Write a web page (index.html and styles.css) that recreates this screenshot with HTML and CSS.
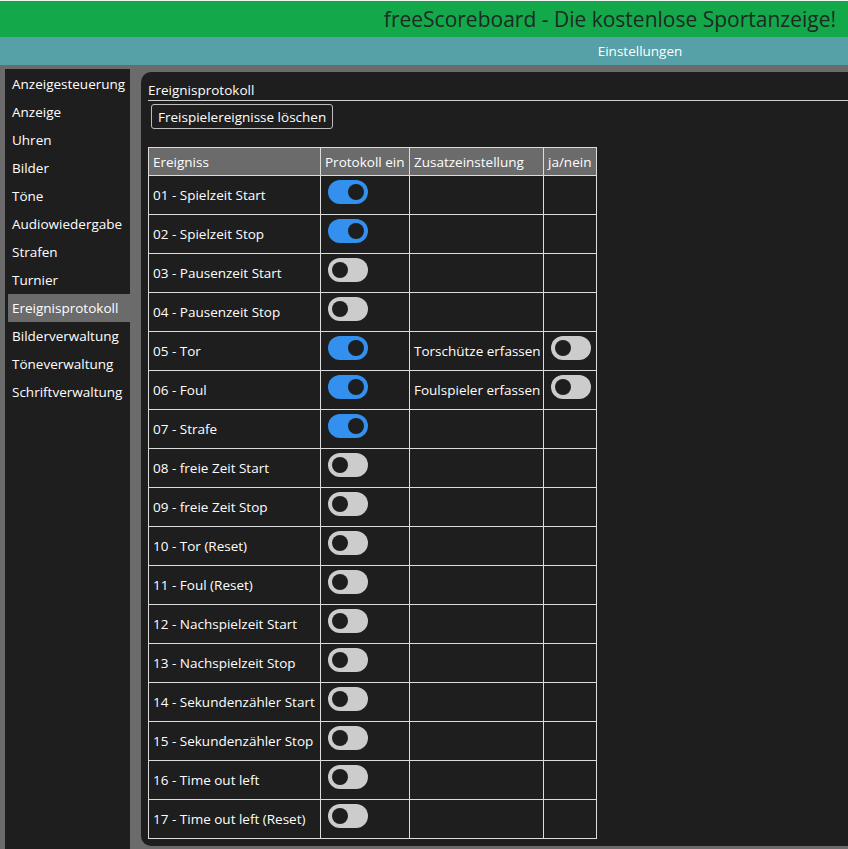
FILE: index.html
```html
<!DOCTYPE html>
<html lang="de">
<head>
    <meta charset="UTF-8">
    <meta name="viewport" content="width=device-width, initial-scale=1.0">
    <title>freeScoreboard - Einstellungen</title>
    <link rel="stylesheet" href="styles.css">
</head>
<body>
    <header class="topbar">
        <h1>freeScoreboard - Die kostenlose Sportanzeige!</h1>
    </header>
    <div class="navbar">Einstellungen</div>

    <div class="content">
        <ul class="sidebar">
            <li>Anzeigesteuerung</li>
            <li>Anzeige</li>
            <li>Uhren</li>
            <li>Bilder</li>
            <li>Töne</li>
            <li>Audiowiedergabe</li>
            <li>Strafen</li>
            <li>Turnier</li>
            <li class="active">Ereignisprotokoll</li>
            <li>Bilderverwaltung</li>
            <li>Töneverwaltung</li>
            <li>Schriftverwaltung</li>
        </ul>

        <div class="panel">
            <div class="panel-title">Ereignisprotokoll</div>
            <button class="btn">Freispielereignisse löschen</button>

            <table class="events">
                <thead>
                    <tr>
                        <th class="col-name">Ereigniss</th>
                        <th class="col-on">Protokoll ein</th>
                        <th class="col-extra">Zusatzeinstellung</th>
                        <th class="col-yes">ja/nein</th>
                    </tr>
                </thead>
                <tbody>
                    <tr><td>01 - Spielzeit Start</td><td><span class="toggle on"></span></td><td></td><td></td></tr>
                    <tr><td>02 - Spielzeit Stop</td><td><span class="toggle on"></span></td><td></td><td></td></tr>
                    <tr><td>03 - Pausenzeit Start</td><td><span class="toggle"></span></td><td></td><td></td></tr>
                    <tr><td>04 - Pausenzeit Stop</td><td><span class="toggle"></span></td><td></td><td></td></tr>
                    <tr><td>05 - Tor</td><td><span class="toggle on"></span></td><td>Torschütze erfassen</td><td><span class="toggle"></span></td></tr>
                    <tr><td>06 - Foul</td><td><span class="toggle on"></span></td><td>Foulspieler erfassen</td><td><span class="toggle"></span></td></tr>
                    <tr><td>07 - Strafe</td><td><span class="toggle on"></span></td><td></td><td></td></tr>
                    <tr><td>08 - freie Zeit Start</td><td><span class="toggle"></span></td><td></td><td></td></tr>
                    <tr><td>09 - freie Zeit Stop</td><td><span class="toggle"></span></td><td></td><td></td></tr>
                    <tr><td>10 - Tor (Reset)</td><td><span class="toggle"></span></td><td></td><td></td></tr>
                    <tr><td>11 - Foul (Reset)</td><td><span class="toggle"></span></td><td></td><td></td></tr>
                    <tr><td>12 - Nachspielzeit Start</td><td><span class="toggle"></span></td><td></td><td></td></tr>
                    <tr><td>13 - Nachspielzeit Stop</td><td><span class="toggle"></span></td><td></td><td></td></tr>
                    <tr><td>14 - Sekundenzähler Start</td><td><span class="toggle"></span></td><td></td><td></td></tr>
                    <tr><td>15 - Sekundenzähler Stop</td><td><span class="toggle"></span></td><td></td><td></td></tr>
                    <tr><td>16 - Time out left</td><td><span class="toggle"></span></td><td></td><td></td></tr>
                    <tr><td>17 - Time out left (Reset)</td><td><span class="toggle"></span></td><td></td><td></td></tr>
                </tbody>
            </table>
        </div>
    </div>
</body>
</html>
```

FILE: styles.css
```css
html, body {
    margin: 0;
    padding: 0;
}

body {
    font-family: "Open Sans", "Noto Sans", sans-serif;
    font-size: 13.5px;
    color: #fff;
    background-color: #6b6b6b;
    overflow: hidden;
}

.topbar {
    border-top: 1px solid #f4f4f4;
    background-color: #13a84a;
    height: 36px;
    display: flex;
    align-items: center;
    justify-content: flex-end;
    padding-right: 12px;
}

.topbar h1 {
    margin: 0;
    font-size: 21px;
    font-weight: normal;
    color: #1e2a24;
}

.navbar {
    height: 28px;
    line-height: 28px;
    background-color: #56a0a8;
    text-align: center;
    padding-left: 432px;
}

.content {
    display: flex;
    align-items: stretch;
    gap: 11px;
    padding-left: 5px;
}

.sidebar {
    list-style: none;
    margin: 4px 0 0 0;
    padding: 1px 0 0 3px;
    width: 122px;
    background-color: #1e1e1e;
}

.sidebar li {
    height: 28px;
    line-height: 28px;
    padding-left: 4px;
    white-space: nowrap;
}

.sidebar li.active {
    background-color: #6b6b6b;
}

.panel {
    flex: 1;
    margin: 7px 0 4px 0;
    padding: 10px 0 7px 7px;
    background-color: #1e1e1e;
    border-radius: 10px 0 0 10px;
}

.panel-title {
    height: 18px;
    line-height: 16px;
    border-bottom: 1px solid #cfcfcf;
}

.btn {
    margin: 3px 0 0 3px;
    height: 25px;
    padding: 0 6px;
    font-family: inherit;
    font-size: 13.5px;
    color: #fff;
    background-color: #1e1e1e;
    border: 1px solid #bdbdbd;
    border-radius: 3px;
}

.events {
    margin-top: 18px;
    table-layout: fixed;
    border-collapse: collapse;
    border: 1px solid #dcdcdc;
}

.events th,
.events td {
    border: 1px solid #dcdcdc;
    padding: 0 0 0 4px;
    text-align: left;
    white-space: nowrap;
}

.events th {
    height: 27px;
    font-weight: normal;
    background-color: #6b6b6b;
}

.events td {
    height: 38px;
}

.col-name { width: 167px; }
.col-on { width: 84px; }
.col-extra { width: 129px; }
.col-yes { width: 48px; }

.toggle {
    position: relative;
    display: block;
    width: 40px;
    height: 24px;
    border-radius: 12px;
    background-color: #cccccc;
    margin: -6px 0 0 3px;
}

.toggle::after {
    content: "";
    position: absolute;
    top: 4px;
    left: 4px;
    width: 16px;
    height: 16px;
    border-radius: 50%;
    background-color: #1e1e1e;
}

.toggle.on {
    background-color: #3390ee;
}

.toggle.on::after {
    left: 20px;
}
```
